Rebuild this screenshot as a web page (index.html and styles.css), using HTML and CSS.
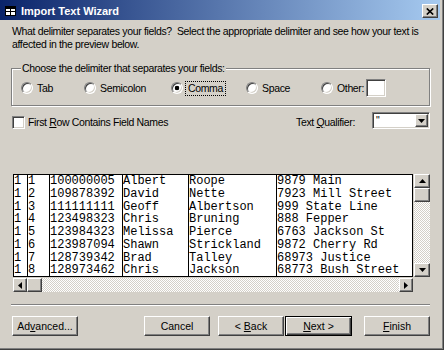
FILE: index.html
```html
<!DOCTYPE html>
<html lang="en">
<head>
    <meta charset="UTF-8">
    <title>Import Text Wizard</title>
    <link rel="stylesheet" href="styles.css">
</head>
<body>
    <div class="window">
        <div class="titlebar">
            <svg class="app-icon" width="11" height="10" viewBox="0 0 11 10">
                <rect x="0.5" y="0.5" width="10" height="9" fill="#fff" stroke="#000"/>
                <rect x="1" y="1" width="9" height="2" fill="#000"/>
                <line x1="5.5" y1="1" x2="5.5" y2="9" stroke="#000"/>
                <line x1="1" y1="5.5" x2="10" y2="5.5" stroke="#000"/>
            </svg>
            <span class="title">Import Text Wizard</span>
            <span class="close btn3d">
                <svg width="8" height="7" viewBox="0 0 8 7">
                    <path d="M0.8 0.5 L7.2 6.5 M7.2 0.5 L0.8 6.5" stroke="#000" stroke-width="1.7"/>
                </svg>
            </span>
        </div>

        <div class="content">
            <p class="intro">What delimiter separates your fields?&nbsp; Select the appropriate delimiter and see how your text is<br>affected in the preview below.</p>

            <fieldset class="group">
                <legend>Choose the delimiter that separates your fields:</legend>
                <div class="options">
                    <label class="opt opt-tab"><span class="radio"></span>Tab</label>
                    <label class="opt opt-semi"><span class="radio"></span>Semicolon</label>
                    <label class="opt opt-comma"><span class="radio on"></span><span class="focus">Comma</span></label>
                    <label class="opt opt-space"><span class="radio"></span>Space</label>
                    <label class="opt opt-other"><span class="radio"></span>Other:<span class="textbox"></span></label>
                </div>
            </fieldset>

            <div class="field-row">
                <label class="check"><span class="checkbox"></span><span>First <u>R</u>ow Contains Field Names</span></label>
                <label class="qualifier"><span>Text <u>Q</u>ualifier:</span>
                    <span class="combo">
                        <span class="combo-value">"</span>
                        <span class="combo-btn btn3d">
                            <svg width="7" height="4" viewBox="0 0 7 4"><path d="M0 0 H7 L3.5 4 Z" fill="#000"/></svg>
                        </span>
                    </span>
                </label>
            </div>

            <div class="preview">
                <div class="grid">
                    <div class="col c1">1
1
1
1
1
1
1
1</div>
                    <div class="col c2">1
2
3
4
5
6
7
8</div>
                    <div class="col c3">100000005
109878392
111111111
123498323
123984323
123987094
128739342
128973462</div>
                    <div class="col c4">Albert
David
Geoff
Chris
Melissa
Shawn
Brad
Chris</div>
                    <div class="col c5">Roope
Nette
Albertson
Bruning
Pierce
Strickland
Talley
Jackson</div>
                    <div class="col c6">9879 Main
7923 Mill Street
999 State Line
888 Fepper
6763 Jackson St
9872 Cherry Rd
68973 Justice
68773 Bush Street</div>
                </div>
                <div class="vscroll">
                    <span class="sb-btn btn3d"><svg width="7" height="4" viewBox="0 0 7 4"><path d="M0 4 H7 L3.5 0 Z" fill="#000"/></svg></span>
                    <span class="sb-thumb btn3d"></span>
                    <span class="sb-track"></span>
                    <span class="sb-btn btn3d"><svg width="7" height="4" viewBox="0 0 7 4"><path d="M0 0 H7 L3.5 4 Z" fill="#000"/></svg></span>
                </div>
                <div class="hscroll">
                    <span class="sb-btn btn3d"><svg width="4" height="7" viewBox="0 0 4 7"><path d="M4 0 V7 L0 3.5 Z" fill="#000"/></svg></span>
                    <span class="sb-thumb btn3d"></span>
                    <span class="sb-track"></span>
                    <span class="sb-btn btn3d"><svg width="4" height="7" viewBox="0 0 4 7"><path d="M0 0 V7 L4 3.5 Z" fill="#000"/></svg></span>
                </div>
                <div class="corner"></div>
            </div>

            <div class="separator"></div>

            <div class="buttons">
                <button class="btn btn3d">Ad<u>v</u>anced...</button>
                <button class="btn btn3d cancel">Cancel</button>
                <button class="btn btn3d back">&lt; <u>B</u>ack</button>
                <button class="btn default"><u>N</u>ext &gt;</button>
                <button class="btn btn3d finish"><u>F</u>inish</button>
            </div>
        </div>
    </div>
</body>
</html>
```

FILE: styles.css
```css
* {
    box-sizing: border-box;
}
body {
    margin: 0;
    background: #d4d0c8;
    font-family: "Liberation Sans", Arial, sans-serif;
    font-size: 10.5px;
    letter-spacing: -0.35px;
    color: #000;
}
u {
    text-decoration: underline;
    text-underline-offset: 1px;
}
.window {
    width: 444px;
    height: 350px;
    background: #d4d0c8;
    box-shadow: inset -1px -1px 0 #404040, inset -2px -2px 0 #808080;
    overflow: hidden;
}
.btn3d {
    background: #d4d0c8;
    border: 1px solid;
    border-color: #fff #404040 #404040 #fff;
    box-shadow: inset -1px -1px 0 #808080;
}

/* title bar */
.titlebar {
    display: flex;
    align-items: center;
    width: 440px;
    height: 20px;
    padding: 2px 2px 0 5px;
    background: linear-gradient(to right, #0a246a, #a6caf0);
    color: #fff;
}
.app-icon {
    margin-right: 5px;
}
.title {
    flex: 1;
    font-size: 11px;
    font-weight: bold;
    letter-spacing: 0;
}
.close {
    display: flex;
    align-items: center;
    justify-content: center;
    width: 16px;
    height: 14px;
}

/* dialog body */
.content {
    padding: 0 13px 0 11px;
}
.intro {
    margin: 5px 0 0;
    padding-left: 1px;
    line-height: 13px;
}
.group {
    width: 419px;
    margin: 11px 0 0;
    padding: 0 0 10px;
    border: 1px solid #808080;
    box-shadow: 1px 1px 0 #fff, inset 1px 1px 0 #fff;
    min-width: 0;
}
.group legend {
    margin-left: 9px;
    padding: 0 1px;
    line-height: 13px;
    background: #d4d0c8;
}
.options {
    display: flex;
    align-items: center;
    height: 14px;
    margin-top: 6px;
    padding-left: 9px;
}
.opt {
    display: flex;
    align-items: center;
    line-height: 13px;
}
.opt-tab { width: 63px; }
.opt-semi { width: 87px; }
.opt-comma { width: 75px; }
.opt-space { width: 75px; }
.radio {
    width: 12px;
    height: 12px;
    margin-right: 4px;
    border-radius: 50%;
    background: #fff;
    border: 1px solid;
    border-color: #808080 #fff #fff #808080;
    box-shadow: inset 1px 1px 0 #404040, inset -1px -1px 0 #d4d0c8;
}
.radio.on {
    background: radial-gradient(circle, #000 0 2px, #fff 2.6px);
}
.focus {
    margin-left: -2px;
    padding: 0 2px;
    border: 1px dotted #000;
}
.textbox {
    width: 20px;
    height: 18px;
    margin-left: 2px;
    background: #fff;
    border: 1px solid;
    border-color: #808080 #fff #fff #808080;
    box-shadow: inset 1px 1px 0 #404040, inset -1px -1px 0 #d4d0c8;
}

.field-row {
    display: flex;
    align-items: flex-end;
    justify-content: space-between;
    width: 419px;
    height: 17px;
    margin-top: 6px;
    padding-left: 1px;
}
.check, .qualifier {
    display: flex;
    align-items: flex-end;
    line-height: 13px;
}
.checkbox {
    width: 13px;
    height: 13px;
    margin-right: 3px;
    background: #fff;
    border: 1px solid;
    border-color: #808080 #fff #fff #808080;
    box-shadow: inset 1px 1px 0 #404040, inset -1px -1px 0 #d4d0c8;
}
.combo {
    display: flex;
    width: 58px;
    height: 17px;
    margin-left: 17px;
    padding: 1px;
    background: #fff;
    border: 1px solid;
    border-color: #808080 #fff #fff #808080;
    box-shadow: inset 1px 1px 0 #404040, inset -1px -1px 0 #d4d0c8;
}
.combo-value {
    flex: 1;
    padding-left: 2px;
    line-height: 13px;
}
.combo-btn {
    display: flex;
    align-items: center;
    justify-content: center;
    width: 13px;
}

/* preview grid */
.preview {
    display: grid;
    grid-template-columns: 400px 17px;
    grid-template-rows: 103px 15px;
    margin: 45px 0 0 2px;
}
.grid {
    display: flex;
    background: #fff;
    border: 1px solid #000;
    overflow: hidden;
    font-family: "Liberation Mono", "Courier New", monospace;
    font-size: 12px;
    letter-spacing: 0;
    line-height: 12.75px;
}
.col {
    white-space: pre;
    overflow: hidden;
    border-right: 1px solid #000;
}
.c1 { width: 14px; }
.c2 { width: 22px; }
.c3 { width: 73px; }
.c4 { width: 66px; }
.c5 { width: 88px; }
.c6 { width: 135px; border-right: none; }

.vscroll, .hscroll {
    display: flex;
}
.vscroll {
    flex-direction: column;
    padding-left: 1px;
}
.hscroll {
    padding-top: 1px;
}
.sb-btn {
    display: flex;
    align-items: center;
    justify-content: center;
    flex: none;
}
.vscroll .sb-btn, .vscroll .sb-thumb {
    height: 14px;
}
.hscroll .sb-btn {
    width: 14px;
}
.hscroll .sb-thumb {
    width: 15px;
}
.sb-track {
    flex: 1;
    background: repeating-conic-gradient(#fff 0 25%, #d4d0c8 0 50%) 0 0 / 2px 2px;
}

.separator {
    width: 419px;
    height: 2px;
    margin-top: 12px;
    border-top: 1px solid #808080;
    border-bottom: 1px solid #fff;
}

.buttons {
    display: flex;
    width: 419px;
    margin-top: 10px;
    padding-left: 1px;
}
.btn {
    width: 66px;
    height: 20px;
    padding: 0;
    font: inherit;
    color: #000;
}
.cancel {
    margin-left: auto;
}
.back {
    margin-left: 8px;
}
.default {
    width: 67px;
    margin-left: 1px;
    background: #d4d0c8;
    border: 1px solid #000;
    box-shadow: inset 1px 1px 0 #fff, inset -1px -1px 0 #404040, inset -2px -2px 0 #808080;
}
.finish {
    margin-left: 12px;
}
```
